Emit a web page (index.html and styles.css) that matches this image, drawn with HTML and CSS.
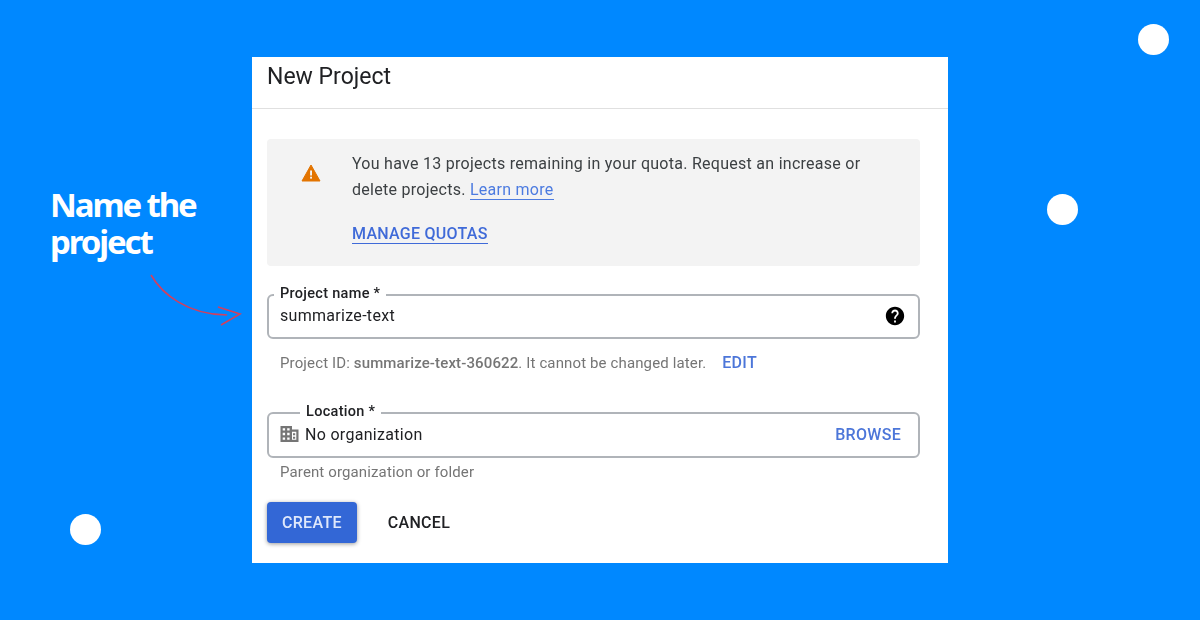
FILE: index.html
```html
<!DOCTYPE html>
<html lang="en">
<head>
    <meta charset="UTF-8">
    <meta name="viewport" content="width=device-width, initial-scale=1.0">
    <title>New Project</title>
    <link rel="stylesheet" href="styles.css">
</head>
<body>
    <div class="dot dot-top"></div>
    <div class="dot dot-right"></div>
    <div class="dot dot-bottom"></div>

    <h2 class="callout">Name the project</h2>
    <svg class="arrow" width="100" height="60" viewBox="0 0 100 60" fill="none">
        <path d="M1 1 C 12 20, 38 41, 77 41" stroke="#d1405f" stroke-width="1.6"/>
        <path d="M68 33 L90 40 L71 51" stroke="#d1405f" stroke-width="1.6"/>
    </svg>

    <div class="dialog">
        <div class="dialog-title">New Project</div>

        <div class="dialog-body">
            <div class="notice">
                <div class="notice-icon">
                    <svg width="20" height="18" viewBox="0 0 20 18">
                        <path d="M10 1 L19 17 H1 Z" fill="#e37400" stroke="#e37400" stroke-linejoin="round"/>
                        <rect x="9.1" y="6.5" width="1.9" height="5" fill="#f3f3f3"/>
                        <rect x="9.1" y="12.7" width="1.9" height="1.9" fill="#f3f3f3"/>
                    </svg>
                </div>
                <div class="notice-text">
                    <p>You have 13 projects remaining in your quota. Request an increase or delete projects. <a class="link">Learn more</a></p>
                    <a class="link link-strong">MANAGE QUOTAS</a>
                </div>
            </div>

            <fieldset class="field field-name">
                <legend>Project name *</legend>
                <span class="field-value">summarize-text</span>
                <svg class="help" width="22" height="22" viewBox="0 0 24 24">
                    <path d="M12 2C6.48 2 2 6.48 2 12s4.48 10 10 10 10-4.48 10-10S17.52 2 12 2zm1 17h-2v-2h2v2zm2.07-7.75l-.9.92C13.45 12.9 13 13.5 13 15h-2v-.5c0-1.1.45-2.1 1.17-2.83l1.24-1.26c.37-.36.59-.86.59-1.41 0-1.1-.9-2-2-2s-2 .9-2 2H8c0-2.21 1.79-4 4-4s4 1.79 4 4c0 .88-.36 1.68-.93 2.25z" fill="#000"/>
                </svg>
            </fieldset>

            <div class="hint hint-id">
                <span>Project ID: <span class="hint-strong">summarize-text-360622</span>. It cannot be changed later.</span>
                <a class="action">EDIT</a>
            </div>

            <fieldset class="field field-location">
                <legend>Location *</legend>
                <svg class="org" width="19" height="18" viewBox="0 0 19 18">
                    <path d="M0.5 1h11.5v3.5h6.5V17H0.5z M2.7 3.2v2.4h2.4V3.2z M7.2 3.2v2.4h2.4V3.2z M2.7 7.8v2.4h2.4V7.8z M7.2 7.8v2.4h2.4V7.8z M2.7 12.4v2.4h2.4v-2.4z M7.2 12.4v2.4h2.4v-2.4z M12 6.7v8.1h4.3V6.7z" fill="#757575" fill-rule="evenodd"/>
                    <path d="M13 8.2h2.2v2H13z M13 11.8h2.2v2H13z" fill="#757575"/>
                </svg>
                <span class="field-value">No organization</span>
                <a class="action action-right">BROWSE</a>
            </fieldset>

            <div class="hint hint-parent">Parent organization or folder</div>

            <div class="buttons">
                <button class="btn btn-create">CREATE</button>
                <button class="btn btn-cancel">CANCEL</button>
            </div>
        </div>
    </div>
</body>
</html>
```

FILE: styles.css
```css
* {
    box-sizing: border-box;
}
body {
    margin: 0;
    height: 620px;
    overflow: hidden;
    position: relative;
    background-color: #0088ff;
    font-family: Roboto, "Liberation Sans", sans-serif;
    display: flex;
    justify-content: center;
    align-items: flex-start;
    padding-top: 57px;
}

/* decoration on the blue background */
.dot {
    position: absolute;
    width: 31px;
    height: 31px;
    border-radius: 50%;
    background: white;
}
.dot-top { left: 1138px; top: 24px; }
.dot-right { left: 1047px; top: 194px; }
.dot-bottom { left: 70px; top: 514px; }

.callout {
    position: absolute;
    left: 50px;
    top: 186px;
    width: 170px;
    margin: 0;
    color: white;
    font-family: "Noto Sans", sans-serif;
    font-size: 33px;
    line-height: 37px;
    font-weight: 700;
    letter-spacing: -2.1px;
}
.arrow {
    position: absolute;
    left: 150px;
    top: 274px;
}

.dialog {
    width: 696px;
    height: 506px;
    background: white;
    filter: blur(0.4px);
}
.dialog-title {
    height: 52px;
    padding: 7px 15px 0;
    font-size: 23px;
    line-height: 26px;
    color: #202124;
    border-bottom: 1px solid #e0e0e0;
}
.dialog-body {
    padding: 30px 28px 0 15px;
}

.notice {
    display: flex;
    height: 127px;
    background: #f3f3f3;
    border-radius: 4px;
}
.notice-icon {
    width: 85px;
    padding: 25px 0 0 34px;
}
.notice-text {
    padding-top: 12px;
    font-size: 16px;
    line-height: 25.5px;
    letter-spacing: 0.27px;
    color: #3c4043;
}
.notice-text p {
    margin: 0 0 19px;
    width: 530px;
}
.link {
    color: #4c7be0;
    border-bottom: 1.5px solid #4c7be0;
}
.link-strong {
    color: #3f6ad8;
    font-weight: 500;
    border-color: #3f6ad8;
}

.field {
    display: flex;
    align-items: center;
    margin: 0;
    padding: 0 11px;
    border: 2px solid #b0b4b9;
    border-radius: 6px;
    font-size: 16px;
    letter-spacing: 0.3px;
    color: #202124;
    min-width: 0;
}
.field legend {
    padding: 0 6px 2px;
    font-size: 14.5px;
    line-height: 16px;
    font-weight: 500;
    letter-spacing: 0.3px;
    color: #202124;
}
.field-name {
    height: 53px;
    margin-top: 20px;
    padding-bottom: 11px;
}
.field-name legend {
    margin-left: -6px;
}
.field-location {
    height: 54px;
    margin-top: 32px;
    padding-bottom: 10px;
}
.field-location legend {
    margin-left: 20px;
}
.help {
    margin-left: auto;
    margin-right: 1px;
    margin-top: 1px;
}
.org {
    margin-right: 6px;
}

.hint {
    font-size: 15px;
    letter-spacing: 0.13px;
    color: #757575;
    padding-left: 13px;
}
.hint-id {
    display: flex;
    align-items: center;
    gap: 16px;
    margin-top: 15px;
    line-height: 18px;
}
.hint-strong {
    font-weight: 500;
}
.hint-parent {
    margin-top: 5px;
    line-height: 18px;
}
.action {
    color: #4c76d9;
    font-size: 16px;
    font-weight: 500;
    letter-spacing: 0.3px;
}
.action-right {
    margin-left: auto;
    margin-right: 6px;
}

.buttons {
    display: flex;
    gap: 16px;
    margin-top: 21px;
}
.btn {
    height: 41px;
    padding: 0 15px;
    border: none;
    border-radius: 4px;
    font-family: Roboto, sans-serif;
    font-size: 16px;
    font-weight: 500;
    letter-spacing: 0.3px;
    background: white;
    color: #202124;
}
.btn-create {
    background: #3367d6;
    color: #dfe8fb;
    box-shadow: 0 1px 4px rgba(0,0,0,0.4);
}
```
